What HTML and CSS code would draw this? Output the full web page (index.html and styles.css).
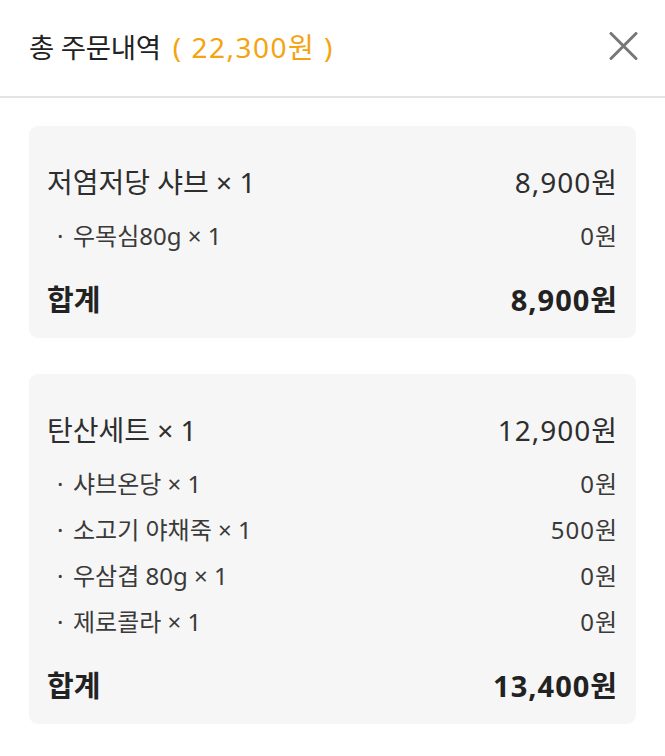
FILE: index.html
```html
<!DOCTYPE html>
<html lang="ko">
<head>
<meta charset="utf-8">
<link rel="stylesheet" href="styles.css">
</head>
<body>
<header class="header">
  <h1 class="title">총 주문내역 <span class="total">( 22,300원 )</span></h1>
  <button class="close" aria-label="닫기">
    <svg width="29" height="28" viewBox="0 0 29 28"><path d="M2 1.5 L27 26.5 M27 1.5 L2 26.5" stroke="#777" stroke-width="3" stroke-linecap="round" fill="none"/></svg>
  </button>
</header>
<main class="content">
  <section class="card">
    <div class="row main-row"><span>저염저당 샤브 × 1</span><span class="price">8,900원</span></div>
    <ul class="subs">
      <li class="row sub-row"><span><span class="dot">·</span>우목심80g × 1</span><span class="price">0원</span></li>
    </ul>
    <div class="row sum-row"><span>합계</span><span class="price">8,900원</span></div>
  </section>
  <section class="card">
    <div class="row main-row"><span>탄산세트 × 1</span><span class="price">12,900원</span></div>
    <ul class="subs">
      <li class="row sub-row"><span><span class="dot">·</span>샤브온당 × 1</span><span class="price">0원</span></li>
      <li class="row sub-row"><span><span class="dot">·</span>소고기 야채죽 × 1</span><span class="price">500원</span></li>
      <li class="row sub-row"><span><span class="dot">·</span>우삼겹 80g × 1</span><span class="price">0원</span></li>
      <li class="row sub-row"><span><span class="dot">·</span>제로콜라 × 1</span><span class="price">0원</span></li>
    </ul>
    <div class="row sum-row"><span>합계</span><span class="price">13,400원</span></div>
  </section>
</main>
</body>
</html>
```
FILE: styles.css
```css
* { box-sizing: border-box; }
html, body { margin: 0; padding: 0; background: #fff; }
body {
  font-family: "Noto Sans", "Noto Sans CJK KR", sans-serif;
  color: #2b2b2b;
  width: 665px;
  height: 756px;
  overflow: hidden;
}
.header {
  height: 98px;
  border-bottom: 2px solid #e4e4e4;
  display: flex;
  align-items: center;
  justify-content: space-between;
  padding: 0 27px 4px 29px;
}
.title {
  margin: 0;
  font-size: 27.5px;
  font-weight: 400;
  color: #222;
  letter-spacing: -0.3px;
  white-space: nowrap;
}
.total {
  color: #f5a30f;
  font-size: 28px;
  letter-spacing: 1.5px;
  margin-left: 5px;
}
.close {
  border: 0;
  background: none;
  padding: 0;
  width: 29px;
  height: 28px;
  display: block;
}
.close svg { display: block; }
.content {
  padding: 28px 29px 0;
  display: flex;
  flex-direction: column;
  gap: 36px;
}
.card {
  background: #f6f6f6;
  border-radius: 9px;
  padding: 36px 19px 20px 18px;
}
.row {
  display: flex;
  justify-content: space-between;
  align-items: center;
  white-space: nowrap;
}
.price { letter-spacing: 1px; margin-right: -1px; }
.main-row {
  height: 38px;
  font-size: 28px;
  color: #2e2e2e;
}
.subs {
  list-style: none;
  margin: 0;
  padding: 11px 0 0;
}
.sub-row {
  height: 46px;
  font-size: 24px;
  color: #3a3a3a;
  padding-left: 10px;
}
.dot {
  display: inline-block;
  width: 16px;
}
.sum-row {
  height: 40px;
  margin-top: 21px;
  font-size: 29px;
  font-weight: 700;
  color: #222;
}
```
